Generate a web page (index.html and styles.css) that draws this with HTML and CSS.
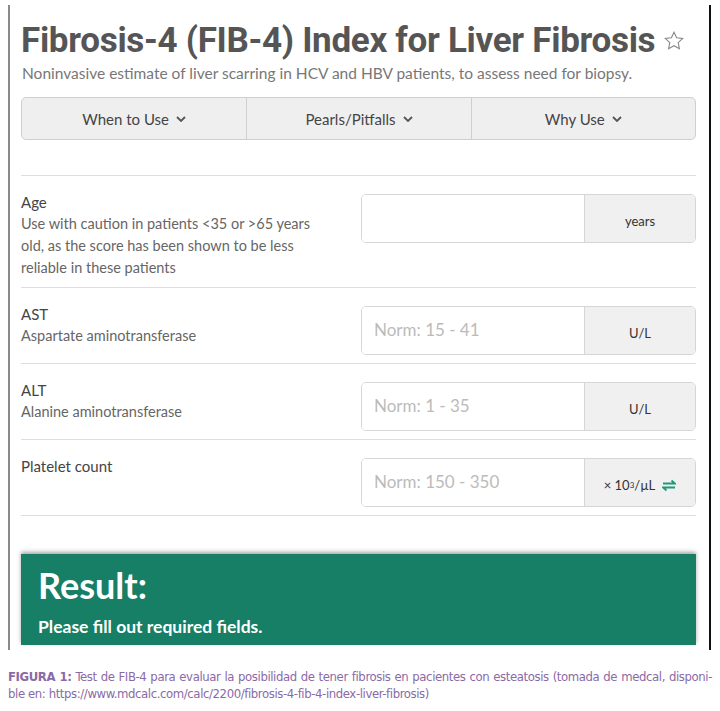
FILE: index.html
```html
<!DOCTYPE html>
<html>
<head>
<meta charset="utf-8">
<link rel="stylesheet" href="styles.css">
</head>
<body>
<div class="frame">
  <h1 class="title">Fibrosis-4 (FIB-4) Index for Liver Fibrosis <svg class="star" viewBox="0 0 20 19"><path d="M10 1.2l2.6 5.6 6.1.7-4.5 4.2 1.2 6-5.4-3-5.4 3 1.2-6-4.5-4.2 6.1-.7z" /></svg></h1>
  <p class="subtitle">Noninvasive estimate of liver scarring in HCV and HBV patients, to assess need for biopsy.</p>
  <div class="tabs">
    <div class="tab">When to Use <svg class="chev" viewBox="0 0 10 6"><path d="M1 1l4 4 4-4" /></svg></div>
    <div class="tab">Pearls/Pitfalls <svg class="chev" viewBox="0 0 10 6"><path d="M1 1l4 4 4-4" /></svg></div>
    <div class="tab">Why Use <svg class="chev" viewBox="0 0 10 6"><path d="M1 1l4 4 4-4" /></svg></div>
  </div>
  <div class="rows">
    <div class="row">
      <div class="label">
        <div class="name">Age</div>
        <div class="desc">Use with caution in patients &lt;35 or &gt;65 years old, as the score has been shown to be less reliable in these patients</div>
      </div>
      <div class="field"><div class="input"></div><div class="unit">years</div></div>
    </div>
    <div class="row">
      <div class="label">
        <div class="name">AST</div>
        <div class="desc">Aspartate aminotransferase</div>
      </div>
      <div class="field"><div class="input ph">Norm: 15 - 41</div><div class="unit">U/L</div></div>
    </div>
    <div class="row">
      <div class="label">
        <div class="name">ALT</div>
        <div class="desc">Alanine aminotransferase</div>
      </div>
      <div class="field"><div class="input ph">Norm: 1 - 35</div><div class="unit">U/L</div></div>
    </div>
    <div class="row">
      <div class="label">
        <div class="name">Platelet count</div>
      </div>
      <div class="field"><div class="input ph">Norm: 150 - 350</div><div class="unit">× 10<sup>3</sup>/µL <svg class="swap" viewBox="0 0 14 12"><path d="M1 4.5H13L9.5 1.5M13 8.5H1L4.5 11.5" /></svg></div></div>
    </div>
  </div>
  <div class="result">
    <div class="result-title">Result:</div>
    <div class="result-text">Please fill out required fields.</div>
  </div>
</div>
<div class="caption">
  <span class="cap-line justify"><b>FIGURA 1:</b> Test de FIB-4 para evaluar la posibilidad de tener fibrosis en pacientes con esteatosis (tomada de medcal, disponi-</span>
  <span class="cap-line">ble en: https://www.mdcalc.com/calc/2200/fibrosis-4-fib-4-index-liver-fibrosis)</span>
</div>
</body>
</html>
```
FILE: styles.css
```css
* { box-sizing: border-box; }
body {
  margin: 0;
  width: 720px;
  height: 711px;
  background: #fff;
  font-family: Lato, "Open Sans", sans-serif;
  overflow: hidden;
}
.frame {
  margin: 5px 0 0 8px;
  width: 703px;
  height: 645px;
  border-left: 2px solid #8a8a8a;
  border-right: 2px solid #111;
  padding: 0 13px 0 11px;
  overflow: hidden;
}
.title {
  margin: 15px 0 0 0;
  font-family: Roboto, sans-serif;
  font-weight: 700;
  font-size: 35px;
  line-height: 42px;
  color: #555;
  letter-spacing: -0.3px;
  white-space: nowrap;
}
.star {
  width: 20px;
  height: 19px;
  fill: none;
  stroke: #888;
  stroke-width: 1.1;
  vertical-align: 2px;
}
.subtitle {
  margin: 0 0 0 1px;
  font-size: 15.5px;
  line-height: 22px;
  color: #777;
}
.tabs {
  margin-top: 13px;
  display: grid;
  grid-template-columns: 1fr 1fr 1fr;
  height: 43px;
  background: #efefef;
  border: 1px solid #cfcfcf;
  border-radius: 5px;
}
.tab {
  display: flex;
  align-items: center;
  justify-content: center;
  gap: 7px;
  font-size: 15px;
  color: #444;
  border-left: 1px solid #cfcfcf;
}
.tab:first-child { border-left: none; }
.chev {
  width: 10px;
  height: 6px;
  fill: none;
  stroke: #555;
  stroke-width: 1.8;
}
.rows {
  margin-top: 35px;
  border-top: 1px solid #dedede;
}
.row {
  display: flex;
  justify-content: space-between;
  border-bottom: 1px solid #dedede;
  padding: 18px 0 8px 0;
  min-height: 76px;
}
.label {
  width: 312px;
  margin-top: -3px;
}
.name {
  font-size: 15px;
  line-height: 22px;
  color: #444;
}
.desc {
  font-size: 14.5px;
  line-height: 22px;
  color: #666;
}
.field {
  display: flex;
  width: 335px;
  height: 49px;
  border: 1px solid #d6d6d6;
  border-radius: 5px;
  overflow: hidden;
}
.input {
  flex: 1;
  background: #fff;
  border-right: 1px solid #d6d6d6;
  padding: 12px 12px;
  font-size: 17px;
  color: #bbb;
}
.unit {
  width: 110px;
  background: #f0f0f0;
  display: flex;
  align-items: center;
  justify-content: center;
  font-size: 13px;
  color: #333;
  padding-top: 4px;
}
.unit sup { font-size: 8px; }
.swap {
  width: 14px;
  height: 12px;
  margin-left: 7px;
  fill: none;
  stroke: #1d9a77;
  stroke-width: 1.8;
}
.result {
  margin-top: 38px;
  background: #167f66;
  height: 91px;
  padding: 10px 17px;
  color: #fff;
  box-shadow: 0 -2px 4px rgba(0,0,0,0.35);
}
.result-title {
  font-size: 36px;
  font-weight: 700;
  line-height: 42px;
}
.result-text {
  margin-top: 10px;
  font-size: 17.5px;
  font-weight: 700;
}
.caption {
  margin: 18px 0 0 8px;
  width: 704px;
  font-family: "DejaVu Sans Condensed", sans-serif;
  font-size: 13px;
  line-height: 17px;
  color: #8a6aa6;
  letter-spacing: -0.4px;
}
.cap-line {
  display: block;
  white-space: nowrap;
}
.cap-line.justify {
  text-align: justify;
  text-align-last: justify;
}
.caption b { font-weight: 700; }
```
